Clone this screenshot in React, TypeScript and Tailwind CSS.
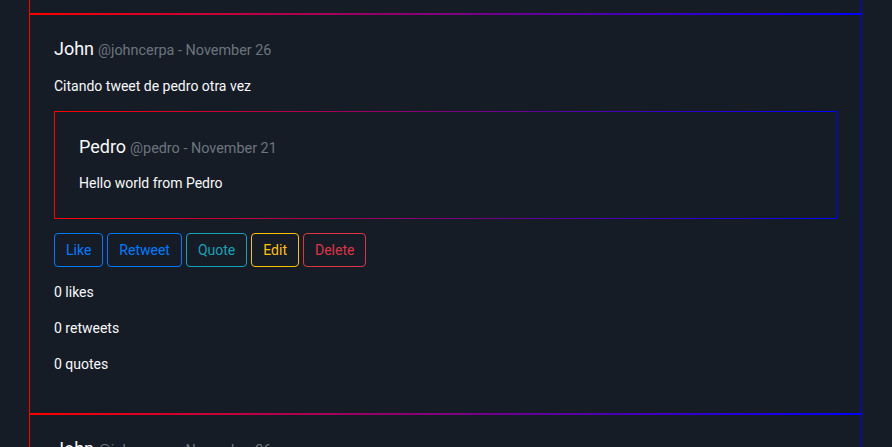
type TweetProps = {
  name: string;
  handle: string;
  date: string;
  text: string;
  quote?: { name: string; handle: string; date: string; text: string };
};

function TweetHeader({ name, handle, date }: { name: string; handle: string; date: string }) {
  return (
    <div className="h-6 leading-[24px]">
      <span className="text-[18px] text-[#f8f9fa]">{name}</span>{" "}
      <span className="text-[14.4px] leading-none text-[#6c757d]">
        @{handle} - {date}
      </span>
    </div>
  );
}

function Tweet({ name, handle, date, text, quote }: TweetProps) {
  return (
    <div className="bg-[linear-gradient(to_right,#ff0000,#0000ff)] pt-[2px]">
      <div className="bg-[#161c26] px-6 pt-[22px] pb-[38px]">
        <TweetHeader name={name} handle={handle} date={date} />
        <p className="mt-[15px] text-sm leading-[21px] text-[#f8f9fa]">{text}</p>
        {quote && (
          <div className="mt-[14px] bg-[linear-gradient(to_right,#ff0000,#0000ff)] p-px">
            <div className="bg-[#161c26] px-6 pt-[23px] pb-[24px]">
              <TweetHeader name={quote.name} handle={quote.handle} date={quote.date} />
              <p className="mt-[14px] text-sm leading-[21px] text-[#f8f9fa]">{quote.text}</p>
            </div>
          </div>
        )}
        <div className="mt-[14px] flex gap-1">
          <button className="rounded border border-[#007bff] px-[11px] py-[6px] text-sm leading-[20px] text-[#007bff]">
            Like
          </button>
          <button className="rounded border border-[#007bff] px-[11px] py-[6px] text-sm leading-[20px] text-[#007bff]">
            Retweet
          </button>
          <button className="rounded border border-[#17a2b8] px-[11px] py-[6px] text-sm leading-[20px] text-[#17a2b8]">
            Quote
          </button>
          <button className="rounded border border-[#ffc107] px-[11px] py-[6px] text-sm leading-[20px] text-[#ffc107]">
            Edit
          </button>
          <button className="rounded border border-[#dc3545] px-[11px] py-[6px] text-sm leading-[20px] text-[#dc3545]">
            Delete
          </button>
        </div>
        <div className="mt-[15px] flex flex-col gap-[15px] text-sm leading-[21px] text-[#f8f9fa]">
          <p>0 likes</p>
          <p>0 retweets</p>
          <p>0 quotes</p>
        </div>
      </div>
    </div>
  );
}

export default function App() {
  return (
    <div
      className="h-[447px] overflow-hidden bg-[#161c26] pl-[29px]"
      style={{ fontFamily: "Roboto, 'Liberation Sans', sans-serif" }}
    >
      <div className="w-[833px] border-x border-l-[#ff0000] border-r-[#0000ff]">
        <div className="h-[13px]" />
        <Tweet
          name="John"
          handle="johncerpa"
          date="November 26"
          text="Citando tweet de pedro otra vez"
          quote={{ name: "Pedro", handle: "pedro", date: "November 21", text: "Hello world from Pedro" }}
        />
        <Tweet
          name="John"
          handle="johncerpa"
          date="November 26"
          text="Citando tweet de pedro otra vez"
        />
      </div>
    </div>
  );
}
